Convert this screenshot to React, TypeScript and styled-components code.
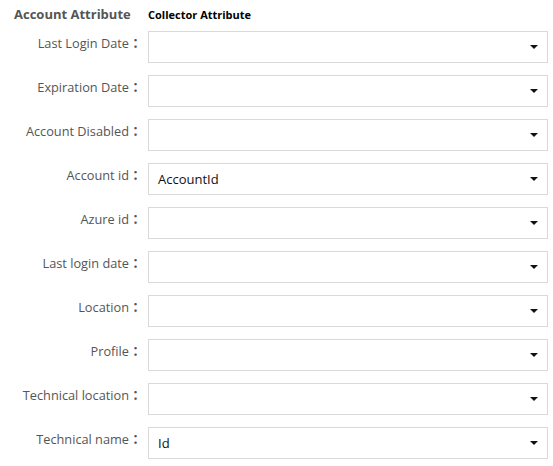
import React from "react";
import styled, { createGlobalStyle } from "styled-components";

const Global = createGlobalStyle`
  body {
    margin: 0;
    background: #ffffff;
    font-family: "Open Sans", "Noto Sans", sans-serif;
  }
`;

const Page = styled.div`
  width: 553px;
  display: flex;
  flex-direction: column;
`;

const Header = styled.div`
  display: flex;
  align-items: baseline;
  height: 31px;
  box-sizing: border-box;
  padding-top: 4px;
`;

const HeaderMain = styled.div`
  width: 148px;
  box-sizing: border-box;
  padding-left: 14px;
  font-size: 13px;
  line-height: 20px;
  font-weight: 700;
  color: #555555;
`;

const HeaderSub = styled.div`
  font-size: 11px;
  line-height: 16px;
  font-weight: 700;
  color: #000000;
`;

const Rows = styled.div`
  display: flex;
  flex-direction: column;
  gap: 12px;
`;

const Row = styled.div`
  display: flex;
  align-items: flex-start;
`;

const Label = styled.div`
  width: 148px;
  box-sizing: border-box;
  padding-right: 6px;
  padding-top: 3px;
  text-align: right;
  font-size: 12.75px;
  line-height: 18px;
  height: 21px;
  color: #555555;
  white-space: nowrap;
`;

const Colon = styled.span`
  font-family: "Noto Sans CJK TC", sans-serif;
  font-size: 13px;
  font-weight: 700;
  line-height: 0;
`;

const Select = styled.div`
  width: 400px;
  height: 32px;
  box-sizing: border-box;
  border: 1px solid #d9d9d9;
  background: #ffffff;
  display: flex;
  align-items: center;
  justify-content: space-between;
  padding: 0 9px 0 9px;
`;

const Value = styled.span`
  font-size: 13px;
  line-height: 18px;
  color: #111111;
`;

const Caret = styled.span`
  width: 0;
  height: 0;
  border-left: 4px solid transparent;
  border-right: 4px solid transparent;
  border-top: 4px solid #111111;
`;

const fields: { label: string; value?: string }[] = [
  { label: "Last Login Date" },
  { label: "Expiration Date" },
  { label: "Account Disabled" },
  { label: "Account id", value: "AccountId" },
  { label: "Azure id" },
  { label: "Last login date" },
  { label: "Location" },
  { label: "Profile" },
  { label: "Technical location" },
  { label: "Technical name", value: "Id" },
];

export default function App() {
  return (
    <>
      <Global />
      <Page>
        <Header>
          <HeaderMain>Account Attribute</HeaderMain>
          <HeaderSub>Collector Attribute</HeaderSub>
        </Header>
        <Rows>
          {fields.map((f) => (
            <Row key={f.label}>
              <Label>
                {f.label}
                <Colon>：</Colon>
              </Label>
              <Select>
                <Value>{f.value ?? ""}</Value>
                <Caret />
              </Select>
            </Row>
          ))}
        </Rows>
      </Page>
    </>
  );
}
